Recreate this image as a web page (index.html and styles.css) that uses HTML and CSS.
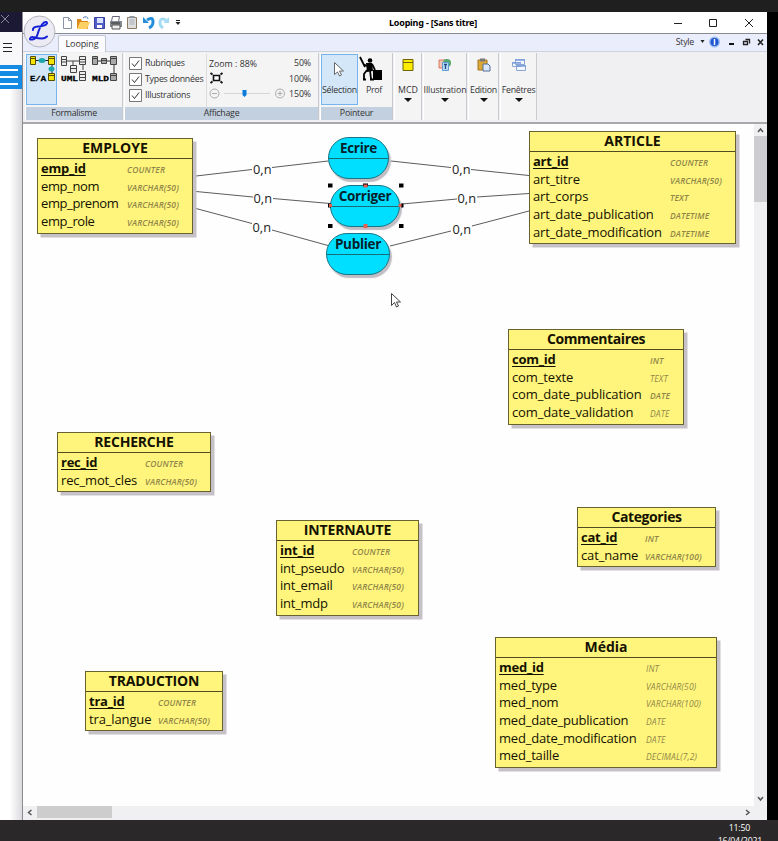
FILE: index.html
```html
<!DOCTYPE html>
<html lang="fr">
<head>
<meta charset="utf-8">
<title>Looping - [Sans titre]</title>
<link rel="stylesheet" href="styles.css">
</head>
<body>
<div class="desktop">
  <div class="screen-top"></div>
  <div class="middle">
    <div class="behind">
      <div class="behind-title"><svg width="21" height="27"><path d="M1 3l8 8M9 3l-8 8" stroke="#8b8798" fill="none"/></svg></div>
      <div class="behind-menu"><i></i><i></i><i></i></div>
      <div class="behind-blue"><i></i><i></i><i></i></div>
      <div class="behind-page"></div>
    </div>
    <div class="window">
      <header class="titlebar">
        <svg class="quick" width="130" height="21" viewBox="0 0 130 21">
          <path d="M2.500 5.500h5l3 3v8h-8z" fill="#fff" stroke="#8993a5"/><path d="M7.500 5.500v3h3" fill="none" stroke="#8993a5"/>
          <path d="M16 7h4l1 2h6v8H16z" fill="#d98b1c"/><path d="M19 10h10l-3 7H16z" fill="#ffd063"/><path d="M22 6q4-3 5 1" fill="none" stroke="#547caf"/>
          <path d="M33.500 5.500h10v11h-10z" fill="#5360c8" stroke="#3941a2"/><path d="M36 6h6v5h-6z" fill="#d8e2fb"/><path d="M36 13h5v3h-5z" fill="#fff"/>
          <path d="M51.500 4.500h7l-1 5h-7z" fill="#fff" stroke="#667"/><path d="M49 9h12v6H49z" fill="#858a90"/><path d="M51 13h8v4h-8z" fill="#eee" stroke="#555"/><path d="M50 11h9" stroke="#333"/>
          <path d="M66.500 5.500h9v11h-9z" fill="#dedede" stroke="#8c7961"/><path d="M68.500 4h5v2h-5z" fill="#8e98a2"/><path d="M68.500 8h5M68.500 10h5M68.500 12h5" stroke="#aab"/>
          <path d="M86 8q6-4 6 2 0 4-4 6" fill="none" stroke="#258edb" stroke-width="3"/><path d="M82 5v6h6z" fill="#258edb"/>
          <path d="M105 8q-6-3-6 3 0 3 3 5" fill="none" stroke="#a6dcf3" stroke-width="3"/><path d="M108 5v6h-6z" fill="#a6dcf3"/>
          <path d="M115 8.500h4" stroke="#222"/><path d="M114.500 10h5L117 13z" fill="#222"/>
        </svg>
        <h1>Looping - [Sans titre]</h1>
        <svg class="winbtns" width="90" height="21" viewBox="0 0 90 21"><path d="M0 11.500h8M35.500 7.500h7v7h-7zM71 7l8 8M79 7l-8 8" fill="none" stroke="#222"/></svg>
      </header>
      <div class="tabs">
        <span class="tab">Looping</span>
        <span class="style">Style</span>
        <svg width="69" height="17" viewBox="0 0 69 17"><path d="M2.500 6h4l-2 3z" fill="#222"/><circle cx="16.500" cy="8" r="5.500" fill="#9bbcf0"/><circle cx="16.500" cy="8" r="4" fill="#1c55cf"/><path d="M16.500 5v6" stroke="#fff" stroke-width="1.500"/><path d="M31 10h5" stroke="#111" stroke-width="2"/><path d="M47.500 5.500h4v4M45.500 7.500h4v3h-4z" stroke="#222" stroke-width="1.300" fill="none"/><path d="M60 5.500l5 5.500M65 5.500L60 11" stroke="#222" stroke-width="1.600"/></svg>
      </div>
      <svg class="orb" width="34" height="34" viewBox="0 0 34 34"><circle cx="16.500" cy="16.500" r="15.500" fill="#ecebf3" stroke="#b3b4bd"/><path d="M10 15q-.5-3 5-3.500 8-.5 9-3 0-2.500-3-1-4 3-6.500 12-1 4-5 5-3 .5-2.500-1 1-2.500 5-1 3 1 7 1 3 0 5-2" fill="none" stroke="#1522d8" stroke-width="2" stroke-linecap="round"/></svg>
      <div class="ribbon">
        <section class="group formalisme">
          <div class="tools">
            <div class="tool chosen"><svg width="30" height="30" viewBox="0 0 30 30"><path d="M9 5.500h13M25 9v11" stroke="#222"/><path d="M3.500 1.500h5v8h-5zM21.500 1.500h6v8h-6zM21.500 18.500h6v7h-6z" fill="#f5e400" stroke="#554d00"/><path d="M3 3.500h6M21 3.500h7M21 20.500h7" stroke="#554d00"/><ellipse cx="15" cy="5.500" rx="3.500" ry="2.500" fill="#1ba8af"/><ellipse cx="24.500" cy="14" rx="3" ry="2.500" fill="#1ba8af"/><text x="3" y="26" textLength="16" lengthAdjust="spacingAndGlyphs" class="glyph">E/A</text></svg></div>
            <div class="tool"><svg width="30" height="30" viewBox="0 0 30 30"><path d="M9 6h13M15 6v4M25 9v6" stroke="#444"/><path d="M3.500 1.500h5v9h-5zM21.500 1.500h6v8h-6zM12.500 10.500h6v7h-6zM21.500 16.500h6v9h-6z" fill="#eee" stroke="#444"/><path d="M3 4.500h6M3 7h6M21 4.500h7M21 7h7M12 13.500h7M21 19.500h7M21 22.500h7" stroke="#444"/><text x="3" y="26" textLength="17" lengthAdjust="spacingAndGlyphs" class="glyph">UML</text></svg></div>
            <div class="tool"><svg width="30" height="30" viewBox="0 0 30 30"><path d="M9 6h13M25 9v11" stroke="#333"/><path d="M3.500 1.500h5v8h-5zM21.500 1.500h6v8h-6zM12.500 3.500h5v5h-5zM21.500 18.500h6v7h-6z" fill="#aaa" stroke="#444"/><path d="M3 3.500h6M21 3.500h7M12 5.500h6M21 20.500h7" stroke="#444"/><text x="3" y="26" textLength="17" lengthAdjust="spacingAndGlyphs" class="glyph">MLD</text></svg></div>
          </div>
          <footer>Formalisme</footer>
        </section>
        <section class="group affichage">
          <div class="tools">
            <div class="checks">
              <label><svg width="13" height="13"><path d="M.5.500h12v12H.5z" fill="#fff" stroke="#777"/><path d="M3 6.500l2.500 3 4.500-6" fill="none" stroke="#333"/></svg>Rubriques</label>
              <label><svg width="13" height="13"><path d="M.5.500h12v12H.5z" fill="#fff" stroke="#777"/><path d="M3 6.500l2.500 3 4.500-6" fill="none" stroke="#333"/></svg>Types données</label>
              <label><svg width="13" height="13"><path d="M.5.500h12v12H.5z" fill="#fff" stroke="#777"/><path d="M3 6.500l2.500 3 4.500-6" fill="none" stroke="#333"/></svg>Illustrations</label>
            </div>
            <div class="zoom">
              <span class="zoomval">Zoom : 88%</span>
              <svg width="80" height="34" viewBox="0 0 80 34"><path d="M4.500 5.500h6v5h-6z" fill="#fff" stroke="#111" stroke-width="1.600"/><path d="M1.500 3l2 1.500M13.500 3l-2 1.500M13.500 13l-2-1.500M1.500 13l2-1.500" fill="none" stroke="#111" stroke-width="1.800"/><g fill="none" stroke="#aaa"><circle cx="5.500" cy="23.500" r="4.500"/><path d="M3 23.500h5"/><circle cx="71" cy="23.500" r="4.500"/><path d="M68.500 23.500h5M71 21v5"/><path d="M15 23.500h46" stroke="#d5d5d7"/></g><path d="M33.500 20h4v5l-2 2-2-2z" fill="#087cda"/></svg>
            </div>
            <div class="percents"><span>50%</span><span>100%</span><span>150%</span></div>
          </div>
          <footer>Affichage</footer>
        </section>
        <section class="group pointeur">
          <div class="tools">
            <div class="tool chosen labelled"><svg width="36" height="30" viewBox="0 0 36 30"><path d="M12.500 7.500v12l3-2.500 2 4 2-1-2-4h4z" fill="#fff" stroke="#666"/></svg><span>Sélection</span></div>
            <div class="tool labelled"><svg width="36" height="30" viewBox="0 0 36 30"><path d="M17 15h9v10h-9z" fill="#000"/><circle cx="14" cy="5.500" r="2.300"/><path d="M10 8h6l1 8-6 1z"/><path d="M4 2l5 10M7 9l4 2M11 15l-3 4v6M14 15l1 9M16 9l3 6M7 24.500h3M14 24.500h4" stroke="#000" stroke-width="1.800" fill="none"/></svg><span>Prof</span></div>
          </div>
          <footer>Pointeur</footer>
        </section>
        <section class="group menu mcd"><svg width="20" height="20" viewBox="0 0 20 20"><path d="M5 3.500h10v11H5z" fill="#ffec00" stroke="#6c6400"/><path d="M5 6.500h10" stroke="#6c6400"/></svg><span>MCD</span><b></b></section>
        <section class="group menu illustration"><svg width="20" height="20" viewBox="0 0 20 20"><path d="M4 4h8v8H4z" fill="#f3c2b3" stroke="#d6785d"/><circle cx="12" cy="7" r="4" fill="#55a86d"/><path d="M7.500 6.500h6v8h-6z" fill="#b9daf5" stroke="#5f9bd5"/><path d="M9 8.500h3M10.500 8v5" stroke="#234c86" stroke-width="1.300"/></svg><span>Illustration</span><b></b></section>
        <section class="group menu edition"><svg width="20" height="20" viewBox="0 0 20 20"><path d="M4 4h9v10H4z" fill="#dda936" stroke="#a27422"/><path d="M6 2.500h5v3H6z" fill="#777"/><path d="M9 8h5l2 2v5H9z" fill="#dce7fa" stroke="#536f9b"/></svg><span>Edition</span><b></b></section>
        <section class="group menu fenetres"><svg width="20" height="20" viewBox="0 0 20 20"><path d="M6.500 3.500h9v5h-9zM3.500 6.500h8v4h-8zM7.500 9.500h9v5h-9z" fill="#f2f6ff" stroke="#8ba4d2"/><path d="M6 4h10M3 7h9M7 10h10" stroke="#7fa0dc" stroke-width="1.500"/></svg><span>Fenêtres</span><b></b></section>
      </div>
      <div class="workspace">
        <main class="canvas">
          <svg class="links" width="731" height="682" viewBox="23 124 731 682">
            <g fill="none" stroke="#4a4a4a" stroke-width=".9"><path d="M196 176L252 169.500M272 167.500L328 161M196 191.500L253 197M273 198.500L330 203.500M196 208.500L252 223.500M272 230L328 245.500M391 161L451 167.500M471 169.500L529 175.500M402 204L457 199M477 197L529 193.500M390 246L451 231M472 226L529 211"/></g>
            <g class="card"><text x="253" y="173.500">0,n</text><text x="253.500" y="202.500">0,n</text><text x="252.500" y="232">0,n</text><text x="452" y="173.500">0,n</text><text x="457.500" y="203">0,n</text><text x="452.500" y="233.500">0,n</text></g>
          </svg>
          <div class="relation ecrire">Ecrire</div>
          <div class="relation corriger">Corriger</div>
          <div class="relation publier">Publier</div>
          <svg class="handles" width="78" height="48" viewBox="0 0 78 48"><path d="M1 .500h4.500v4H1zM36 .500h5v3h-5zM72 .500h4.500v4H72zM1 41h4.500v4H1zM72 41h4.500v4H72zM1 20.500h3v4H1zM74 20.500h2.500v4H74z"/><path d="M36.500 1.500h4v3h-4zM36.500 41h4v4h-4zM2 21h3v3H2zM71.500 21h3v3h-3z" fill="#e75f50"/></svg>
          <article class="entity employe"><h2>EMPLOYE</h2><dl><dt class="key">emp_id</dt><dd>COUNTER</dd><dt>emp_nom</dt><dd>VARCHAR(50)</dd><dt>emp_prenom</dt><dd>VARCHAR(50)</dd><dt>emp_role</dt><dd>VARCHAR(50)</dd></dl></article>
          <article class="entity article"><h2>ARTICLE</h2><dl><dt class="key">art_id</dt><dd>COUNTER</dd><dt>art_titre</dt><dd>VARCHAR(50)</dd><dt>art_corps</dt><dd>TEXT</dd><dt>art_date_publication</dt><dd>DATETIME</dd><dt>art_date_modification</dt><dd>DATETIME</dd></dl></article>
          <article class="entity commentaires"><h2>Commentaires</h2><dl><dt class="key">com_id</dt><dd>INT</dd><dt>com_texte</dt><dd class="thin">TEXT</dd><dt>com_date_publication</dt><dd>DATE</dd><dt>com_date_validation</dt><dd class="thin">DATE</dd></dl></article>
          <article class="entity recherche"><h2>RECHERCHE</h2><dl><dt class="key">rec_id</dt><dd>COUNTER</dd><dt>rec_mot_cles</dt><dd>VARCHAR(50)</dd></dl></article>
          <article class="entity categories"><h2>Categories</h2><dl><dt class="key">cat_id</dt><dd>INT</dd><dt>cat_name</dt><dd>VARCHAR(100)</dd></dl></article>
          <article class="entity internaute"><h2>INTERNAUTE</h2><dl><dt class="key">int_id</dt><dd>COUNTER</dd><dt>int_pseudo</dt><dd>VARCHAR(50)</dd><dt>int_email</dt><dd>VARCHAR(50)</dd><dt>int_mdp</dt><dd>VARCHAR(50)</dd></dl></article>
          <article class="entity traduction"><h2>TRADUCTION</h2><dl><dt class="key">tra_id</dt><dd>COUNTER</dd><dt>tra_langue</dt><dd>VARCHAR(50)</dd></dl></article>
          <article class="entity media"><h2>Média</h2><dl><dt class="key">med_id</dt><dd class="thin">INT</dd><dt>med_type</dt><dd class="thin">VARCHAR(50)</dd><dt>med_nom</dt><dd class="thin">VARCHAR(100)</dd><dt>med_date_publication</dt><dd class="thin">DATE</dd><dt>med_date_modification</dt><dd class="thin">DATE</dd><dt>med_taille</dt><dd class="thin">DECIMAL(7,2)</dd></dl></article>
          <svg class="cursor" width="10" height="16" viewBox="0 0 10 16"><path d="M.5.500v12l3-3 2 4.500 2-1-2-4h4z" fill="#fff" stroke="#444"/></svg>
        </main>
        <div class="vscroll"><svg width="13" height="12"><path d="M4 8l2.500-3L9 8" fill="none" stroke="#555" stroke-width="1.500"/></svg><i></i><svg width="13" height="12"><path d="M4 4l2.500 3L9 4" fill="none" stroke="#555" stroke-width="1.500"/></svg></div>
      </div>
      <div class="hscroll"><svg width="14" height="14"><path d="M8.500 4l-3 2.500 3 2.500" fill="none" stroke="#555" stroke-width="1.500"/></svg><i></i><svg width="13" height="14"><path d="M5 4l3 2.500L5 9" fill="none" stroke="#555" stroke-width="1.500"/></svg></div>
    </div>
    <div class="right-edge"></div>
  </div>
  <div class="taskbar"><span>11:50</span><span>16/04/2021</span></div>
</div>
</body>
</html>
```
FILE: styles.css
```css
* { box-sizing: border-box; }
body { margin: 0; background: #000; font-family: "Open Sans", "Noto Sans", sans-serif; font-size: 8.800px; letter-spacing: -.25px; color: #333; }
svg { display: block; flex: none; }
h1, h2, dl, dd { margin: 0; }
.desktop { width: 778px; height: 841px; overflow: hidden; display: flex; flex-direction: column; }
.screen-top { height: 12px; flex: none; background: #1f1f1f; }
.middle { height: 808px; display: flex; flex: none; }
.behind { width: 23px; flex: none; display: flex; flex-direction: column; background: #fff; border-right: 1px solid #8e8a90; }
.behind-title { height: 20px; background: #1c1935; overflow: hidden; }
.behind-menu { height: 33px; display: flex; flex-direction: column; gap: 3px; padding: 11px 0 0 3px; background: #f8f8fa; }
.behind-menu i { width: 9px; height: 1px; background: #222; }
.behind-blue { height: 24px; background: #168be4; display: flex; flex-direction: column; gap: 5px; padding-top: 4px; }
.behind-blue i { width: 18px; height: 2px; background: #fff; }
.behind-page { flex: 1; background: linear-gradient(90deg, #fff 45%, #dad9dd); }
.right-edge { width: 11px; background: #000; }
.window { position: relative; width: 744px; flex: none; display: flex; flex-direction: column; background: #f0eff2; }
.titlebar { height: 22px; display: flex; flex: none; background: #fff; border-bottom: 1px solid #888a91; }
.quick { margin-left: 38px; }
.titlebar h1 { width: 236px; margin-left: 124px; text-align: center; font: 700 9px/22px "Noto Sans", sans-serif; letter-spacing: -.2px; color: #000; white-space: nowrap; }
.winbtns { margin-left: auto; margin-right: 3px; }
.tabs { height: 18px; display: flex; flex: none; background: #e9edfc; border-bottom: 1px solid #cdd3dc; line-height: 16px; }
.tab { width: 48px; height: 17px; margin: 1px 0 0 35px; text-align: center; background: #fbfbff; border: 1px solid #c1c4cd; border-bottom: 0; border-radius: 2px 2px 0 0; font-size: 9px; letter-spacing: -.1px; line-height: 15px; }
.style { margin-left: auto; margin-right: 4px; }
.orb { position: absolute; left: 0; top: 3px; }
.ribbon { height: 72px; flex: none; display: flex; gap: 1px; padding: 1px 0 2px 2px; border-bottom: 2px solid #a8a8ab; background: #f0eff2; }
.group { display: flex; flex: none; flex-direction: column; border-right: 1px solid #c7cbd0; border-left: 1px solid #fff; background: #f4f4f5; }
.group footer { height: 13px; flex: none; background: #c3d0df; text-align: center; line-height: 13px; }
.tools { flex: 1; display: flex; padding-top: 1px; min-height: 0; }
.tool { width: 31px; height: 51px; padding: 0; border: 1px solid transparent; }
.chosen { background: #d4e7f8; border-color: #75b4ed; }
.glyph { font: 700 8px "Liberation Mono", monospace; letter-spacing: 0; fill: #000; stroke: #000; stroke-width: .3px; }
.formalisme { width: 98px; }
.affichage { width: 195px; }
.pointeur { width: 73px; }
.labelled { width: 37px; text-align: center; display: flex; flex-direction: column; }
.labelled:last-child { width: 32px; }
.labelled svg { align-self: center; }
.labelled span { white-space: nowrap; line-height: 10px; align-self: center; }
.checks { width: 82px; flex: none; padding: 3px 0 0 4px; border-right: 1px solid #dddde0; display: flex; flex-direction: column; gap: 3px; }
.checks label { display: flex; gap: 3px; height: 13px; line-height: 13px; white-space: nowrap; }
.zoom { width: 80px; flex: none; padding: 4px 0 0 2px; display: flex; flex-direction: column; }
.zoomval { height: 12px; line-height: 12px; letter-spacing: 0; }
.percents { width: 24px; padding-top: 3px; display: flex; flex-direction: column; text-align: right; letter-spacing: -.1px; }
.percents span { height: 15.700px; line-height: 13px; }
.menu { align-items: center; padding-top: 3px; }
.menu span { margin-top: 8px; line-height: 12px; white-space: nowrap; }
.menu b { margin-top: 2px; border: 4px solid transparent; border-top-color: #111; border-bottom: 0; }
.mcd { width: 28px; }
.mcd span { letter-spacing: .1px; }
.illustration { width: 44px; }
.illustration span { letter-spacing: -.1px; }
.edition { width: 31px; }
.fenetres { width: 37px; }
.workspace { height: 682px; flex: none; display: flex; }
.canvas { position: relative; width: 731px; height: 682px; flex: none; background: #fefefe; font-family: "Open Sans", sans-serif; color: #151200; }
.links, .handles, .cursor, .relation, .entity { position: absolute; }
.links { left: 0; top: 0; }
.card text { font: 12.800px "Open Sans", sans-serif; letter-spacing: 0; fill: #222; }
.entity { border: 1px solid #686230; background: #fff57c; box-shadow: 3.500px 3.500px 0 #c5c1c7; }
.entity h2 { height: 20px; border-bottom: 1px solid #504b20; text-align: center; font: 700 14px/18px "Open Sans", sans-serif; letter-spacing: 0; }
.entity dl { display: grid; grid-template-columns: var(--name) 1fr; grid-auto-rows: 17.700px; padding: 1px 0 0 3px; font-size: 13px; letter-spacing: -.13px; line-height: 17px; white-space: nowrap; }
.entity dd { padding-top: 1px; font-size: 8.500px; letter-spacing: .12px; font-style: italic; font-weight: 600; color: #918749; }
.entity .thin { font-weight: 400; }
.entity .key { font-weight: 700; letter-spacing: -.25px; text-decoration: underline; text-underline-offset: 2px; text-decoration-thickness: 1px; text-decoration-skip-ink: none; }
.employe { --name: 86px; left: 14px; top: 14px; width: 156px; height: 96px; }
.employe dt { letter-spacing: -.4px; }
.article { --name: 137px; left: 506px; top: 7px; width: 207px; height: 113px; }
.commentaires { --name: 138px; left: 485px; top: 205px; width: 176px; height: 96px; }
.commentaires h2 { letter-spacing: -.4px; }
.recherche { --name: 84px; left: 34px; top: 308px; width: 154px; height: 60px; }
.recherche h2 { letter-spacing: -.2px; }
.categories { --name: 64px; left: 554px; top: 383px; width: 139px; height: 60px; }
.categories h2 { letter-spacing: -.4px; }
.internaute { --name: 72px; left: 253px; top: 396px; width: 143px; height: 96px; }
.internaute dt { letter-spacing: -.25px; }
.internaute h2, .traduction h2 { letter-spacing: -.15px; }
.traduction { --name: 69px; left: 62px; top: 547px; width: 138px; height: 60px; }
.media { --name: 147px; left: 472px; top: 513px; width: 222px; height: 131px; }
.media dt { letter-spacing: -.2px; }
.relation { height: 42px; border: 1px solid #167687; border-radius: 21px; background: linear-gradient(#176c7b, #176c7b) 0 20px / 100% 1px no-repeat #00dfff; box-shadow: 2px 3px 1px #c0bdc4; text-align: center; font-size: 13.500px; letter-spacing: -.3px; line-height: 20px; font-weight: 700; color: #06202b; }
.ecrire { left: 305px; top: 13px; width: 61px; }
.corriger { left: 307px; top: 61px; width: 70px; }
.publier { left: 303px; top: 109px; width: 64px; }
.handles { left: 304px; top: 59px; }
.cursor { left: 368px; top: 169px; }
.vscroll { width: 13px; background: #f0eff2; display: flex; flex-direction: column; }
.vscroll i { height: 66px; margin-bottom: auto; background: #cdccd0; }
.vscroll svg:last-child { margin-bottom: 1px; }
.hscroll { height: 14px; flex: none; display: flex; background: #f0eff2; }
.hscroll i { width: 75px; height: 12px; margin-right: auto; background: #cdcdcd; }
.hscroll svg:last-child { margin-right: 13px; }
.taskbar { height: 21px; flex: none; overflow: hidden; background: #2a2829; color: #fff; display: flex; flex-direction: column; align-items: flex-end; padding: 2px 28px 0 0; line-height: 13px; }
.taskbar span:last-child { margin-right: -12px; }
```
